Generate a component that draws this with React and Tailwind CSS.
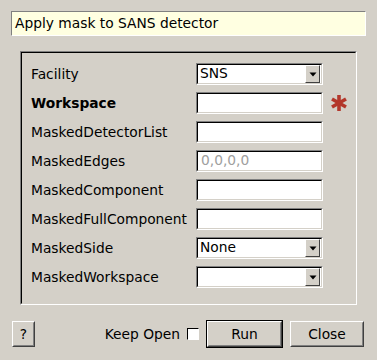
import React from "react";

const font = { fontFamily: '"DejaVu Sans", "Liberation Sans", sans-serif' };

function Sunken({ children, className = "" }) {
  return (
    <div className={"border border-t-[#808080] border-l-[#808080] border-b-white border-r-white " + className}>
      <div className="h-full w-full border border-t-black border-l-black border-b-[#d4d0c8] border-r-[#d4d0c8] bg-white flex items-center">
        {children}
      </div>
    </div>
  );
}

function TextInput({ placeholder }) {
  return (
    <Sunken className="w-[127px] h-[22px]">
      {placeholder ? (
        <span className="pl-[3px] text-[#a0a0a0] leading-none">{placeholder}</span>
      ) : null}
    </Sunken>
  );
}

function Combo({ value }) {
  return (
    <Sunken className="w-[127px] h-[22px]">
      <span className="flex-1 pl-[2px] leading-none text-black">{value}</span>
      <div className="mr-[1px] h-[18px] w-[15px] border border-t-white border-l-white border-b-[#404040] border-r-[#404040] bg-[#d4d0c8] flex items-center justify-center">
        <svg width="8" height="5" viewBox="0 0 8 5">
          <polygon points="0.5,0.5 7.5,0.5 4,4.5" fill="#000" />
        </svg>
      </div>
    </Sunken>
  );
}

function Row({ label, bold, children, required }) {
  return (
    <div className="flex items-center h-[22px]">
      <div className={"w-[165px] text-black " + (bold ? "font-bold" : "")}>{label}</div>
      {children}
      {required ? (
        <svg className="ml-[7px]" width="18" height="18" viewBox="-9 -9 18 18">
          <g stroke="#b3372b" strokeWidth="3.6" strokeLinecap="butt">
            <line x1="0" y1="-8" x2="0" y2="8" />
            <line x1="-7" y1="-4" x2="7" y2="4" />
            <line x1="-7" y1="4" x2="7" y2="-4" />
          </g>
        </svg>
      ) : null}
    </div>
  );
}

function Button({ children, className = "" }) {
  return (
    <div className={"border border-t-white border-l-white border-b-[#404040] border-r-[#404040] bg-[#d4d0c8] " + className}>
      <div className="h-full w-full border border-transparent border-b-[#808080] border-r-[#808080] flex items-center justify-center text-black">
        {children}
      </div>
    </div>
  );
}

export default function App() {
  return (
    <div className="w-[377px] h-[360px] bg-[#d4d0c8] text-[13.8px] flex flex-col" style={font}>
      <div className="mt-[11px] ml-[11px] w-[355px] h-[25px] border border-t-[#808080] border-l-[#808080] border-b-white border-r-white bg-[#ffffe1] flex items-center pl-[3px] text-black">
        Apply mask to SANS detector
      </div>
      <div className="mt-[15px] ml-[20px] w-[337px] h-[254px] border border-t-[#808080] border-l-[#808080] border-b-white border-r-white">
        <div className="h-full w-full border border-t-black border-l-black border-b-[#d4d0c8] border-r-[#d4d0c8] pl-[9px] pt-[10px] flex flex-col gap-[7px]">
          <Row label="Facility"><Combo value="SNS" /></Row>
          <Row label="Workspace" bold required><TextInput /></Row>
          <Row label="MaskedDetectorList"><TextInput /></Row>
          <Row label="MaskedEdges"><TextInput placeholder="0,0,0,0" /></Row>
          <Row label="MaskedComponent"><TextInput /></Row>
          <Row label="MaskedFullComponent"><TextInput /></Row>
          <Row label="MaskedSide"><Combo value="None" /></Row>
          <Row label="MaskedWorkspace"><Combo value="" /></Row>
        </div>
      </div>
      <div className="mt-[15px] ml-[12px] mr-[13px] flex items-center h-[28px]">
        <Button className="w-[23px] h-[26px]">?</Button>
        <div className="flex-1" />
        <span className="text-black">Keep Open</span>
        <div className="ml-[7px] w-[12px] h-[12px] border border-t-black border-l-black border-b-white border-r-white bg-white" />
        <div className="ml-[7px] w-[77px] h-[28px] border border-black">
          <Button className="w-full h-full">Run</Button>
        </div>
        <Button className="ml-[7px] w-[74px] h-[26px]">Close</Button>
      </div>
    </div>
  );
}
